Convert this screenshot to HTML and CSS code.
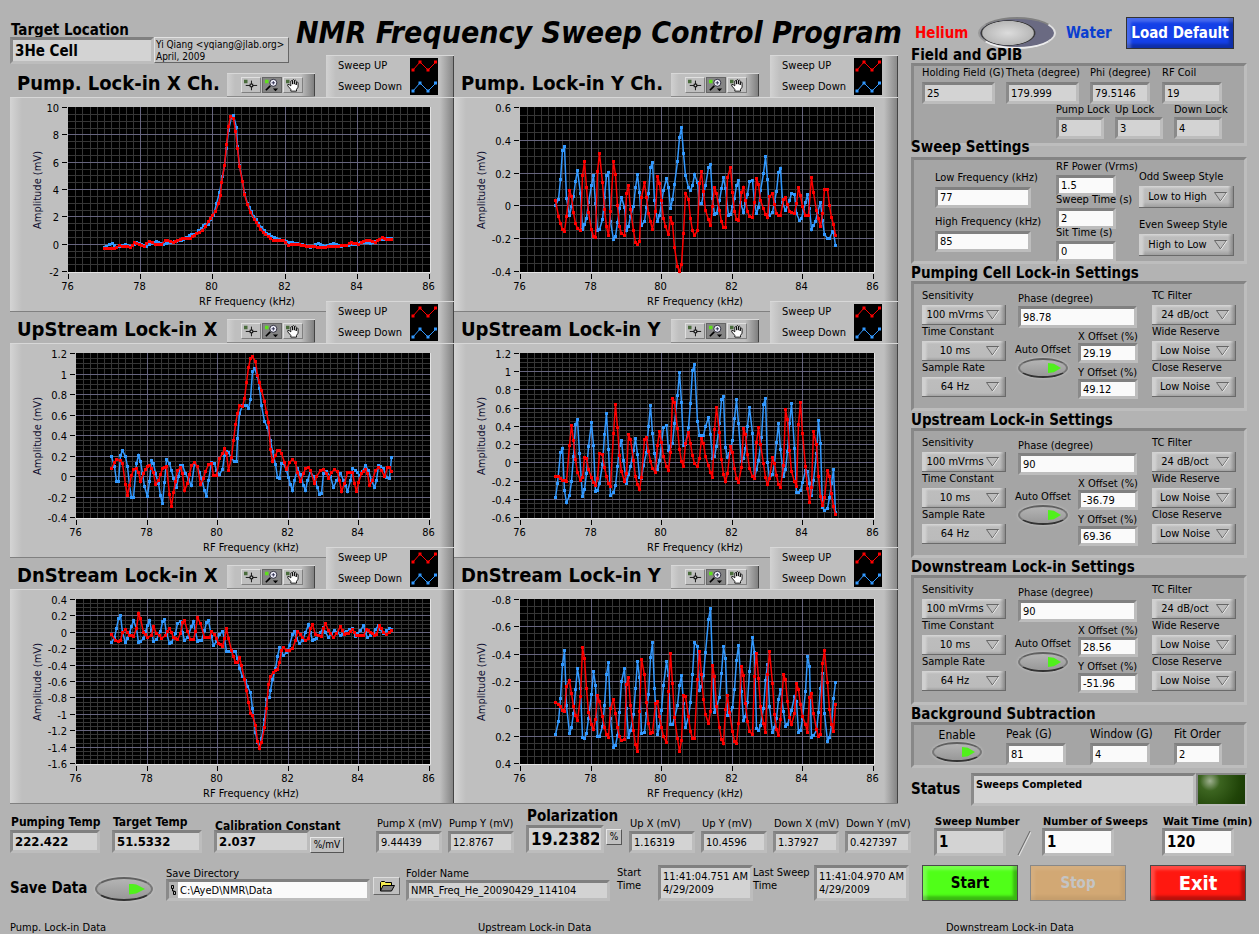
FILE: index.html
```html
<!DOCTYPE html>
<html lang="en">
<head>
<meta charset="utf-8">
<title>NMR Frequency Sweep Control Program</title>
<link rel="stylesheet" href="styles.css">
</head>
<body>
<svg class="defs" aria-hidden="true">
  <symbol id="i-cross" viewBox="0 0 20 16">
    <rect x="2" y="2" width="4" height="4" fill="#4a6b3c"/>
    <path d="M10.500 3v11M4 8.500h13" stroke="#000" fill="none"/>
    <rect x="9" y="7" width="3" height="3" fill="#c8c8c8" stroke="#000"/>
  </symbol>
  <symbol id="i-zoom" viewBox="0 0 20 16">
    <rect x="2" y="2" width="4" height="4" fill="#5fe01c"/>
    <path d="M8 9l-5 5" stroke="#000" stroke-width="2"/>
    <circle cx="11.500" cy="5.500" r="4" fill="#f4f4ff" stroke="#1c1c2c"/>
    <path d="M9.500 5.500h4M11.500 3.500v4" stroke="#224"/>
    <path d="M11 12h6l-3 3z" fill="#000"/>
  </symbol>
  <symbol id="i-hand" viewBox="0 0 20 16">
    <rect x="2" y="2" width="4" height="4" fill="#4a6b3c"/>
    <path d="M7.500 15v-2L4 9V7.500h1.500L7.500 9V3.500L8.500 3l1 .5V7 2.500l1-.7 1 .7V7l.3-4 1-.5.8.7V8l.5-3 1-.4.700.9v5l-1.800 2.500v2z" fill="#fff" stroke="#000"/>
  </symbol>
  <symbol id="i-legend" viewBox="0 0 28 37">
    <rect width="28" height="37" fill="#000"/>
    <g fill="none" stroke="#f00"><path d="M3 12l7-8 8 8 8-8"/><path stroke-width="3" d="M1.500 12h3M8.500 4h3M16.500 12h3M24 4h3"/></g>
    <g fill="none" stroke="#39f"><path d="M3 33l7-8 8 8 8-8"/><path stroke-width="3" d="M1.500 33h3M8.500 25h3M16.500 33h3M24 25h3"/></g>
  </symbol>
</svg>

<main class="page">
  <section class="plots">
    <header class="head">
      <div class="field bold target"><label for="loc">Target Location</label><input id="loc" class="box ro" value="3He Cell" readonly></div>
      <p class="author">Yi Qiang &lt;yqiang@jlab.org&gt;<br>April, 2009</p>
      <h1>NMR Frequency Sweep Control Program</h1>
    </header>
    <div class="charts">
      <article class="chart">
        <div class="chart-head"><h2>Pump. Lock-in X Ch.</h2>
          <div class="tools"><button aria-label="Cursor"><svg><use href="#i-cross"/></svg></button><button class="on" aria-label="Zoom"><svg><use href="#i-zoom"/></svg></button><button aria-label="Pan"><svg><use href="#i-hand"/></svg></button></div>
          <div class="legend"><div><span>Sweep UP</span><span>Sweep Down</span></div><svg><use href="#i-legend"/></svg></div></div>
        <div class="panel"><svg class="graph" data-chart="pumpX" viewBox="0 0 444 215"></svg></div>
      </article>
      <article class="chart">
        <div class="chart-head"><h2>Pump. Lock-in Y Ch.</h2>
          <div class="tools"><button aria-label="Cursor"><svg><use href="#i-cross"/></svg></button><button class="on" aria-label="Zoom"><svg><use href="#i-zoom"/></svg></button><button aria-label="Pan"><svg><use href="#i-hand"/></svg></button></div>
          <div class="legend"><div><span>Sweep UP</span><span>Sweep Down</span></div><svg><use href="#i-legend"/></svg></div></div>
        <div class="panel"><svg class="graph" data-chart="pumpY" viewBox="0 0 444 215"></svg></div>
      </article>
      <article class="chart">
        <div class="chart-head"><h2>UpStream Lock-in X</h2>
          <div class="tools"><button aria-label="Cursor"><svg><use href="#i-cross"/></svg></button><button class="on" aria-label="Zoom"><svg><use href="#i-zoom"/></svg></button><button aria-label="Pan"><svg><use href="#i-hand"/></svg></button></div>
          <div class="legend"><div><span>Sweep UP</span><span>Sweep Down</span></div><svg><use href="#i-legend"/></svg></div></div>
        <div class="panel"><svg class="graph" data-chart="upX" viewBox="0 0 444 215"></svg></div>
      </article>
      <article class="chart">
        <div class="chart-head"><h2>UpStream Lock-in Y</h2>
          <div class="tools"><button aria-label="Cursor"><svg><use href="#i-cross"/></svg></button><button class="on" aria-label="Zoom"><svg><use href="#i-zoom"/></svg></button><button aria-label="Pan"><svg><use href="#i-hand"/></svg></button></div>
          <div class="legend"><div><span>Sweep UP</span><span>Sweep Down</span></div><svg><use href="#i-legend"/></svg></div></div>
        <div class="panel"><svg class="graph" data-chart="upY" viewBox="0 0 444 215"></svg></div>
      </article>
      <article class="chart">
        <div class="chart-head"><h2>DnStream Lock-in X</h2>
          <div class="tools"><button aria-label="Cursor"><svg><use href="#i-cross"/></svg></button><button class="on" aria-label="Zoom"><svg><use href="#i-zoom"/></svg></button><button aria-label="Pan"><svg><use href="#i-hand"/></svg></button></div>
          <div class="legend"><div><span>Sweep UP</span><span>Sweep Down</span></div><svg><use href="#i-legend"/></svg></div></div>
        <div class="panel"><svg class="graph" data-chart="downX" viewBox="0 0 444 215"></svg></div>
      </article>
      <article class="chart">
        <div class="chart-head"><h2>DnStream Lock-in Y</h2>
          <div class="tools"><button aria-label="Cursor"><svg><use href="#i-cross"/></svg></button><button class="on" aria-label="Zoom"><svg><use href="#i-zoom"/></svg></button><button aria-label="Pan"><svg><use href="#i-hand"/></svg></button></div>
          <div class="legend"><div><span>Sweep UP</span><span>Sweep Down</span></div><svg><use href="#i-legend"/></svg></div></div>
        <div class="panel"><svg class="graph" data-chart="downY" viewBox="0 0 444 215"></svg></div>
      </article>
    </div>
  </section>

  <aside class="side">
    <div class="mode">
      <label class="he" for="gas">Helium</label><input id="gas" type="checkbox" class="slide"><label class="wa" for="gas">Water</label>
      <button class="btn blue">Load Default</button>
    </div>

    <h3 class="first">Field and GPIB</h3>
    <div class="group gpib">
      <div class="row r1">
        <div class="field"><label for="hf">Holding Field (G)</label><input id="hf" class="box ro w73" value="25" readonly></div>
        <div class="field"><label for="th">Theta (degree)</label><input id="th" class="box ro w73" value="179.999" readonly></div>
        <div class="field"><label for="ph">Phi (degree)</label><input id="ph" class="box ro w60" value="79.5146" readonly></div>
        <div class="field"><label for="rc">RF Coil</label><input id="rc" class="box ro w60" value="19" readonly></div>
      </div>
      <div class="row r2">
        <div class="field"><label for="pl">Pump Lock</label><input id="pl" class="box ro w48" value="8" readonly></div>
        <div class="field"><label for="ul">Up Lock</label><input id="ul" class="box ro w48" value="3" readonly></div>
        <div class="field"><label for="dl">Down Lock</label><input id="dl" class="box ro w48" value="4" readonly></div>
      </div>
    </div>

    <h3 class="over">Sweep Settings</h3>
    <div class="group sweep">
      <div class="col a">
        <div class="field"><label for="lf">Low Frequency (kHz)</label><input id="lf" class="box w96" value="77"></div>
        <div class="field"><label for="hq">High Frequency (kHz)</label><input id="hq" class="box w96" value="85"></div>
      </div>
      <div class="col b">
        <div class="field"><label for="rp">RF Power (Vrms)</label><input id="rp" class="box w60" value="1.5"></div>
        <div class="field"><label for="st">Sweep Time (s)</label><input id="st" class="box w60" value="2"></div>
        <div class="field"><label for="si">Sit Time (s)</label><input id="si" class="box w60" value="0"></div>
      </div>
      <div class="col c">
        <div class="field"><label for="os">Odd Sweep Style</label><select id="os"><option>Low to High</option></select></div>
        <div class="field"><label for="es">Even Sweep Style</label><select id="es"><option>High to Low</option></select></div>
      </div>
    </div>

    <h3>Pumping Cell Lock-in Settings</h3>
    <div class="group lockin">
      <div class="col">
        <div class="field"><label for="p1">Sensitivity</label><select id="p1"><option>100 mVrms</option></select></div>
        <div class="field"><label for="p2">Time Constant</label><select id="p2"><option>10 ms</option></select></div>
        <div class="field"><label for="p3">Sample Rate</label><select id="p3"><option>64 Hz</option></select></div>
      </div>
      <div class="mid">
        <div class="field phase"><label for="p4">Phase (degree)</label><input id="p4" class="box" value="98.78"></div>
        <div class="auto"><label for="p5">Auto Offset</label><input id="p5" type="checkbox" class="led" checked></div>
        <div class="offs">
          <div class="field"><label for="p6">X Offset (%)</label><input id="p6" class="box w60" value="29.19"></div>
          <div class="field"><label for="p7">Y Offset (%)</label><input id="p7" class="box w60" value="49.12"></div>
        </div>
      </div>
      <div class="col">
        <div class="field"><label for="p8">TC Filter</label><select id="p8"><option>24 dB/oct</option></select></div>
        <div class="field"><label for="p9">Wide Reserve</label><select id="p9"><option>Low Noise</option></select></div>
        <div class="field"><label for="p0">Close Reserve</label><select id="p0"><option>Low Noise</option></select></div>
      </div>
    </div>

    <h3>Upstream Lock-in Settings</h3>
    <div class="group lockin">
      <div class="col">
        <div class="field"><label for="u1">Sensitivity</label><select id="u1"><option>100 mVrms</option></select></div>
        <div class="field"><label for="u2">Time Constant</label><select id="u2"><option>10 ms</option></select></div>
        <div class="field"><label for="u3">Sample Rate</label><select id="u3"><option>64 Hz</option></select></div>
      </div>
      <div class="mid">
        <div class="field phase"><label for="u4">Phase (degree)</label><input id="u4" class="box" value="90"></div>
        <div class="auto"><label for="u5">Auto Offset</label><input id="u5" type="checkbox" class="led" checked></div>
        <div class="offs">
          <div class="field"><label for="u6">X Offset (%)</label><input id="u6" class="box w60" value="-36.79"></div>
          <div class="field"><label for="u7">Y Offset (%)</label><input id="u7" class="box w60" value="69.36"></div>
        </div>
      </div>
      <div class="col">
        <div class="field"><label for="u8">TC Filter</label><select id="u8"><option>24 dB/oct</option></select></div>
        <div class="field"><label for="u9">Wide Reserve</label><select id="u9"><option>Low Noise</option></select></div>
        <div class="field"><label for="u0">Close Reserve</label><select id="u0"><option>Low Noise</option></select></div>
      </div>
    </div>

    <h3>Downstream Lock-in Settings</h3>
    <div class="group lockin">
      <div class="col">
        <div class="field"><label for="d1">Sensitivity</label><select id="d1"><option>100 mVrms</option></select></div>
        <div class="field"><label for="d2">Time Constant</label><select id="d2"><option>10 ms</option></select></div>
        <div class="field"><label for="d3">Sample Rate</label><select id="d3"><option>64 Hz</option></select></div>
      </div>
      <div class="mid">
        <div class="field phase"><label for="d4">Phase (degree)</label><input id="d4" class="box" value="90"></div>
        <div class="auto"><label for="d5">Auto Offset</label><input id="d5" type="checkbox" class="led" checked></div>
        <div class="offs">
          <div class="field"><label for="d6">X Offset (%)</label><input id="d6" class="box w60" value="28.56"></div>
          <div class="field"><label for="d7">Y Offset (%)</label><input id="d7" class="box w60" value="-51.96"></div>
        </div>
      </div>
      <div class="col">
        <div class="field"><label for="d8">TC Filter</label><select id="d8"><option>24 dB/oct</option></select></div>
        <div class="field"><label for="d9">Wide Reserve</label><select id="d9"><option>Low Noise</option></select></div>
        <div class="field"><label for="d0">Close Reserve</label><select id="d0"><option>Low Noise</option></select></div>
      </div>
    </div>

    <h3>Background Subtraction</h3>
    <div class="group bg">
      <div class="auto"><label for="en">Enable</label><input id="en" type="checkbox" class="led" checked></div>
      <div class="field"><label for="pk">Peak (G)</label><input id="pk" class="box w60" value="81"></div>
      <div class="field"><label for="wi">Window (G)</label><input id="wi" class="box w60" value="4"></div>
      <div class="field"><label for="fo">Fit Order</label><input id="fo" class="box w48" value="2"></div>
    </div>

    <div class="status"><b>Status</b><output class="box ro">Sweeps Completed</output><i class="lamp"></i></div>
  </aside>

  <section class="readings">
    <div class="field bold temp"><label for="m1">Pumping Temp</label><input id="m1" class="box ro" value="222.422" readonly></div>
    <div class="field bold temp"><label for="m2">Target Temp</label><input id="m2" class="box ro" value="51.5332" readonly></div>
    <div class="field bold calib"><label for="m3">Calibration Constant</label><input id="m3" class="box ro" value="2.037" readonly></div>
    <button class="unit per">%/mV</button>
    <div class="field mv"><label for="m4">Pump X (mV)</label><input id="m4" class="box ro" value="9.44439" readonly></div>
    <div class="field mv"><label for="m5">Pump Y (mV)</label><input id="m5" class="box ro" value="12.8767" readonly></div>
    <div class="field bold pol"><label for="m6">Polarization</label><input id="m6" class="box ro" value="19.2382" readonly></div>
    <button class="unit pct">%</button>
    <div class="field mv"><label for="m7">Up X (mV)</label><input id="m7" class="box ro" value="1.16319" readonly></div>
    <div class="field mv"><label for="m8">Up Y (mV)</label><input id="m8" class="box ro" value="10.4596" readonly></div>
    <div class="field mv"><label for="m9">Down X (mV)</label><input id="m9" class="box ro" value="1.37927" readonly></div>
    <div class="field mv"><label for="m0">Down Y (mV)</label><input id="m0" class="box ro" value="0.427397" readonly></div>
  </section>

  <section class="sweeps">
    <div class="field bold"><label for="s1">Sweep Number</label><input id="s1" class="box ro" value="1" readonly></div>
    <svg class="slash" viewBox="0 0 14 26"><path d="M1 25L13 1" stroke="#666"/><path d="M2 26L14 2" stroke="#e4e4e4"/></svg>
    <div class="field bold"><label for="s2">Number of Sweeps</label><input id="s2" class="box" value="1"></div>
    <div class="field bold wait"><label for="s3">Wait Time (min)</label><input id="s3" class="box" value="120"></div>
  </section>

  <section class="saving">
    <label class="save" for="sv">Save Data</label><input id="sv" type="checkbox" class="led big" checked>
    <div class="field dir"><label for="sd">Save Directory</label>
      <div class="path"><svg viewBox="0 0 7 12"><path d="M1.500 1.500h2v3h-2zM3.500 7.500h2v3h-2zM2.500 4v3h2" fill="none" stroke="#000"/></svg><input id="sd" value="C:\AyeD\NMR\Data"></div></div>
    <button class="browse" aria-label="Browse"><svg viewBox="0 0 16 12"><path d="M1.500 11V2.500l1-1h3l1 1h6v3" fill="#f4ec50" stroke="#000"/><path d="M1.500 11l2.500-5.500h11.500l-3 5.500z" fill="#808080" stroke="#000"/></svg></button>
    <div class="field folder"><label for="fn">Folder Name</label><input id="fn" class="box ro" value="NMR_Freq_He_20090429_114104" readonly></div>
    <span class="tl">Start<br>Time</span><output class="box ro time">11:41:04.751 AM<br>4/29/2009</output>
    <span class="tl last">Last Sweep<br>Time</span><output class="box ro time">11:41:04.970 AM<br>4/29/2009</output>
  </section>

  <section class="actions">
    <button class="btn green">Start</button>
    <button class="btn tan" disabled>Stop</button>
    <button class="btn red">Exit</button>
  </section>

  <footer class="foot"><span>Pump. Lock-in Data</span><span>Upstream Lock-in Data</span><span>Downstream Lock-in Data</span></footer>
</main>
<script src="charts.js"></script>
</body>
</html>
```

FILE: styles.css
```css
* { box-sizing: border-box; }
body {
  margin: 0;
  background: #b3b3b3;
  color: #000;
  font: 11px/14px "DejaVu Sans Condensed", "DejaVu Sans", sans-serif;
}
input, select, button, output { font: inherit; color: inherit; margin: 0; }
h1, h2, h3, p { margin: 0; font-weight: bold; }
.defs { display: none; }
svg { display: block; }

.page {
  display: grid;
  grid-template-columns: minmax(0, 1fr) 348px;
  padding-left: 10px;
  overflow: hidden;
}

/* fields */
.field { display: flex; flex-direction: column; align-items: flex-start; white-space: nowrap; }
.box {
  display: block;
  height: 22px;
  padding: 0 2px;
  border: 3px solid;
  border-color: #808080 #bdbdbd #bdbdbd #8a8a8a;
  background: #fafafa;
  border-radius: 0;
  outline: 0;
}
.ro { background: #d3d3d3; }
.bold { font-weight: bold; }
.w48 { width: 48px; }
.w60 { width: 60px; }
.w73 { width: 73px; }
.w96 { width: 96px; }

select {
  appearance: none;
  width: 84px;
  height: 20px;
  padding: 0 20px 0 2px;
  border: 0;
  border-radius: 0;
  text-align-last: center;
  background:
    url("data:image/svg+xml,%3Csvg xmlns='http://www.w3.org/2000/svg' width='14' height='10'%3E%3Cpath d='M.5.5h12L6.500 9z' fill='none' stroke='%23666'/%3E%3Cpath d='M7 9.500L13 1' fill='none' stroke='%23eee'/%3E%3C/svg%3E") right 6px center no-repeat,
    linear-gradient(to right, #d0d0d0, #d0d0d0 3px, transparent 6px, transparent calc(100% - 6px), #808080),
    linear-gradient(#d8d8d8, #bdbdbd 3px, #bbb 16px, #999);
  box-shadow: inset -1px -1px 0 #6a6a6a;
}

/* left header */
.head { display: flex; height: 66px; margin-right: 8px; }
.target { padding-top: 20px; width: 144px; font-size: 15px; }
.target label { line-height: 20px; margin-bottom: -3px; padding-left: 1px; }
.target .box { width: 100%; height: 27px; }
.author {
  align-self: flex-start;
  flex: none;
  margin-top: 37px;
  padding: 1px;
  width: 135px;
  height: 26px;
  font: 10px/12px "DejaVu Sans Condensed", "DejaVu Sans", sans-serif;
  border: 1px solid;
  border-color: #e2e2e2 #666 #666 #e2e2e2;
  background: #c0c0c0;
  white-space: nowrap;
}
h1 { font: italic bold 30px/36px "DejaVu Sans Condensed", "DejaVu Sans", sans-serif; padding: 15px 0 0 7px; white-space: nowrap; }

/* charts */
.plots { min-width: 0; }
.charts { display: grid; grid-template-columns: 1fr 1fr; margin-right: 13px; }
.chart-head { display: flex; align-items: flex-end; height: 31px; padding-left: 7px; }
h2 { font-size: 20px; line-height: 28px; flex: 0 0 210px; white-space: nowrap; }
.tools {
  display: flex;
  gap: 1px;
  width: 88px;
  height: 24px;
  padding: 4px 0 0 14px;
  margin-right: auto;
  background: linear-gradient(to right, #d0d0d0, #bfbfbf 8px, #bfbfbf 74px, #808080 87px, #444 87px);
  box-shadow: inset 0 1px #d8d8d8, inset 0 -1px #8a8a8a;
}
.tools button { width: 20px; height: 16px; padding: 0; border: 1px solid; border-color: #e0e0e0 #808080 #808080 #e0e0e0; background: #bfbfbf; }
.tools button.on { background: #858585; border-color: #666; }
.tools svg { width: 18px; height: 14px; }
.legend {
  display: flex;
  justify-content: space-between;
  width: 128px;
  height: 42px;
  padding: 3px 16px 0 12px;
  background: linear-gradient(to right, #d2d2d2, #bfbfbf 10px, #bfbfbf 114px, #8a8a8a 127px, #444 127px);
  box-shadow: inset 0 1px #d8d8d8;
}
.legend span { display: block; height: 21px; line-height: 15px; }
.legend svg { width: 28px; height: 37px; }
.panel {
  background: linear-gradient(to right, #d4d4d4, #bfbfbf 12px, #bfbfbf calc(100% - 14px), #848484 calc(100% - 1px), #444 calc(100% - 1px));
  box-shadow: inset 0 1px #d8d8d8, inset 0 -1px #808080;
}
.graph { width: 100%; font-size: 11px; }
.graph .minor { stroke: #363636; }
.graph .major { stroke: #66647e; }
.graph .tick { stroke: #000; }
.graph .trace { fill: none; stroke-width: 1.5; }
.graph .lip { fill: none; stroke: #e4e4e4; }
.graph .end { text-anchor: end; }
.graph .middle { text-anchor: middle; }
.graph .amp { text-anchor: middle; fill: #101030; }

/* sidebar */
.side { padding-right: 12px; }
.mode { display: flex; align-items: center; padding: 16px 0 0 4px; height: 49px; font-size: 15px; font-weight: bold; }
.he { color: #f00; width: 63px; }
.wa { color: #0a3ed0; width: 60px; }
.slide {
  appearance: none;
  width: 78px;
  height: 32px;
  margin-right: 10px;
  border-radius: 50%;
  border: 2px solid;
  border-color: #808080 #e0e0e0 #eee #999;
  background: radial-gradient(ellipse 28px 13px at 28px 14px, #dcdcdc, #b8b8b8 90%, #333 95%, transparent 100%), #6a6a82;
}
.btn {
  padding: 0;
  height: 36px;
  border: 1px solid #4a4a4a;
  font-weight: bold;
  box-shadow: inset 4px 4px 3px rgba(255, 255, 255, .22), inset -4px -4px 3px rgba(0, 0, 0, .28);
}
.blue { background: #1440e8; color: #fff; width: 108px; height: 32px; font-size: 15px; border-color: #333; white-space: nowrap; }
h3 { font-size: 15px; line-height: 20px; height: 18px; margin-top: -1px; position: relative; white-space: nowrap; }
h3.first { margin-top: -4px; }
h3.over { margin-top: -9px; height: 20px; }
.group {
  border: 3px solid;
  border-color: #848484 #bdbdbd #bdbdbd #888;
  background: #a5a5a5;
  display: flex;
}
.gpib { flex-direction: column; height: 83px; padding: 0 8px; }
.row { display: flex; }
.r1 .field:nth-child(1), .r1 .field:nth-child(2) { width: 84px; }
.r1 .field:nth-child(3) { width: 72px; }
.r1 .box { margin-top: 2px; }
.r2 { padding-left: 134px; margin-top: -1px; }
.r2 .field:nth-child(-n+2) { width: 59px; }

.sweep { height: 107px; }
.sweep .a { width: 142px; padding: 11px 0 0 21px; }
.sweep .a .box { margin: 2px 0 7px; height: 21px; }
.sweep .b { width: 83px; padding-top: 1px; }
.sweep .b .box { height: 21px; margin: 2px 0 -2px; }
.sweep .b label { line-height: 12px; }
.sweep .c { padding-top: 10px; }
.sweep select { width: 95px; height: 22px; margin: 2px 0 10px; }

.lockin { height: 130px; padding: 4px 8px 0; }
.lockin .col { flex: 0 0 84px; }
.lockin .col label { line-height: 16px; }
.lockin select { margin-top: 1px; margin-bottom: -1px; }
.mid { flex: 1; display: grid; grid-template-columns: 63px 1fr; align-content: start; padding: 4px 0 0 9px; }
.phase { grid-column: 1 / 3; padding-left: 3px; margin-bottom: 2px; }
.phase .box { width: 119px; }
.auto { display: flex; flex-direction: column; white-space: nowrap; }
.mid .auto { padding-top: 13px; }
.mid .led { margin-left: 3px; }
.offs { padding-top: 1px; }
.offs label { line-height: 12px; }
.offs .box { margin-bottom: 4px; height: 20px; }

.led {
  appearance: none;
  display: grid;
  align-items: center;
  justify-items: end;
  width: 50px;
  height: 20px;
  margin-top: 1px;
  padding-right: 5px;
  border-radius: 50%;
  border: 2px solid;
  border-color: #606060 #777 #333 #777;
  background: linear-gradient(#b4b4b4, #989898);
  box-shadow: 0 0 3px #ccc;
}
.led::after { content: ""; width: 13px; height: 10px; background: #50f01c; clip-path: polygon(0 0, 45% 8%, 100% 50%, 45% 92%, 0 100%); }

.bg { height: 46px; font-size: 12px; }
.bg .auto { width: 92px; padding: 2px 24px 0 18px; align-items: center; }
.bg .auto label { line-height: 17px; }
.bg .led { margin-top: -2px; flex: none; }
.bg .field label { line-height: 18px; }
.bg .field { width: 84px; }
.bg .field:last-child { width: 48px; }
.bg .box { font-size: 11px; }

.status { display: flex; margin-top: 5px; height: 33px; }
.status b { width: 60px; font-size: 15px; line-height: 32px; }
.status .box { flex: 1; height: 33px; font-weight: bold; line-height: 18px; }
.lamp { width: 51px; border: 2px solid; border-color: #888 #bdbdbd #bdbdbd #888; background: radial-gradient(circle at 12px 6px, #9fb090, #3c6420 10px, #204408 30px, #102a02 56px); }

/* bottom rows */
.readings { display: flex; align-items: flex-end; height: 50px; padding-bottom: 3px; }
.readings label { padding-left: 1px; }
.readings > * { flex: none; }
.temp { width: 102px; }
.calib { width: 96px; }
.temp label { font-size: 12px; line-height: 16px; }
.calib label { font-size: 12px; line-height: 8px; }
.temp .box { width: 90px; height: 23px; font-size: 13px; }
.calib .box { width: 96px; height: 23px; font-size: 13px; }
.unit { padding: 0; border: 1px solid; border-color: #e8e8e8 #555 #555 #e8e8e8; background: #c0c0c0; line-height: 12px; height: 16px; font-size: 10px; }
.per { width: 34px; margin-right: 32px; }
.mv { width: 72px; }
.mv label { line-height: 15px; }
.mv .box { width: 66px; }
.pol { width: 79px; margin-left: 6px; font-size: 15px; }
.pol label { line-height: 18px; }
.pol .box { width: 78px; height: 28px; font-size: 17px; }
.pct { width: 16px; margin: 0 7px 8px 1px; }
.sweeps { display: flex; align-items: flex-end; padding-left: 23px; }
.sweeps .field { width: 72px; }
.sweeps label { line-height: 13px; padding-left: 1px; }
.sweeps .box { width: 72px; height: 28px; font-size: 15px; }
.slash { width: 14px; height: 26px; margin: 0 11px; }
.sweeps .wait { margin-left: 48px; }

.saving { display: flex; height: 45px; padding-top: 9px; }
.saving > * { flex: none; }
.save { width: 85px; font-size: 15px; font-weight: bold; line-height: 46px; }
.led.big { width: 58px; height: 24px; margin: 12px 13px 0 0; padding-right: 6px; }
.led.big::after { width: 16px; height: 11px; }
.dir { width: 204px; }
.dir label { line-height: 18px; margin-bottom: -4px; }
.path { display: flex; align-items: center; width: 100%; height: 24px; border: 3px solid; border-color: #808080 #bdbdbd #bdbdbd #8a8a8a; }
.path svg { width: 7px; height: 12px; margin: 0 1px; flex: none; }
.path input { flex: 1; min-width: 0; height: 100%; border: 0; padding: 0 2px; background: #fafafa; }
.browse { width: 27px; height: 18px; margin: 12px 6px 0 3px; padding: 0 0 0 5px; border: 1px solid; border-color: #ddd #666 #666 #ddd; background: #bfbfbf; }
.browse svg { width: 16px; height: 12px; }
.folder { width: 204px; margin-right: 7px; }
.folder label { line-height: 18px; margin-bottom: -3px; }
.folder .box { width: 100%; }
.tl { width: 41px; line-height: 13px; padding-top: 1px; }
.tl.last { width: 61px; }
.box.time { width: 95px; height: 36px; line-height: 13px; padding: 2px 2px; white-space: nowrap; }
.actions { display: flex; align-items: flex-start; padding: 9px 13px 0 11px; }
.actions .btn { width: 96px; font-size: 15px; }
.green { background: #50ff18; }
.tan { background: #d2a874; color: #c4c4c4; margin: 0 24px 0 12px; border-color: #888; box-shadow: inset 4px 4px 3px rgba(255, 255, 255, .08), inset -4px -4px 3px rgba(0, 0, 0, .06); }
.red { background: #ff1810; color: #fff; }
.actions .red { font-size: 20px; }
.foot { grid-column: 1 / 3; display: grid; grid-template-columns: 468px 468px 1fr; padding-top: 20px; line-height: 14px; }
```

FILE: charts.js
```js
// Trace knots are held at three units per pixel; ox/oy give the panel corner on that grid.
const charts = {
  pumpX: { left: 58, top: 10, step: -2, rows: 6, dec: 0, ox: 30, oy: 291,
    up: "312,745 342,745 358,737 390,742 402,728 432,739 447,723 465,732 485,733 495,720 520,728 540,717 570,716 590,700 608,692 625,665 637,647 646,634 655,610 660,587 665,547 673,495 680,433 686,380 692,350 700,355 707,395 713,445 719,499 727,545 734,583 741,612 752,636 763,657 775,677 790,698 805,708 820,722 850,721 865,735 890,733 920,738 960,742 1000,740 1040,735 1055,728 1075,732 1100,720 1125,727 1147,713 1160,719 1175,718",
    down: "312,742 338,731 350,742 375,732 390,740 410,728 440,738 470,724 490,732 515,726 530,724 550,718 567,706 590,700 610,677 625,672 640,645 650,610 658,578 668,530 673,495 680,445 686,390 694,350 700,347 708,383 713,440 719,495 727,545 734,580 741,610 760,648 785,682 800,700 830,716 860,725 900,732 930,742 955,730 975,738 1000,730 1025,738 1060,734 1090,726 1110,730 1140,718 1175,716" },
  pumpY: { left: 66, top: 0.6, step: -0.2, rows: 5, dec: 1, ox: 12, oy: 291,
    up: "316,601 325,649 331,670 337,688 343,694 349,649 358,571 364,588 370,637 376,670 382,685 391,691 397,526 403,484 409,562 415,637 424,688 430,709 436,712 442,515 448,460 458,547 463,628 469,679 475,706 481,634 490,484 496,523 502,616 508,679 514,700 523,706 529,580 535,556 541,628 550,691 556,727 562,733 568,724 574,592 583,547 589,592 595,640 607,688 616,634 622,529 628,550 640,655 655,703 661,652 667,670 673,742 682,799 688,814 694,793 700,700 706,580 715,598 721,655 727,691 733,706 742,691 748,550 754,514 760,574 766,631 775,658 781,676 793,562 799,580 808,631 814,664 820,682 826,682 832,533 841,502 847,577 853,634 859,658 865,661 874,577 880,562 886,601 892,634 898,649 907,652 913,607 919,535 925,553 931,600 940,625 946,643 952,652 958,589 967,580 973,613 979,640 985,646 991,646 1000,598 1006,592 1012,613 1018,634 1033,640 1039,610 1045,562 1051,586 1057,620 1066,646 1075,646 1084,532 1090,577 1099,631 1111,679 1117,640 1123,568 1132,568 1138,616 1144,652 1150,673 1156,706",
    down: "316,616 325,597 331,539 337,451 343,440 349,595 358,646 370,590 376,545 382,511 391,580 397,688 409,656 424,556 430,526 436,610 442,691 448,688 458,658 470,526 475,518 482,665 490,718 496,709 508,625 515,592 523,622 529,690 535,679 550,620 556,562 562,524 568,578 575,676 583,664 595,580 601,502 607,487 613,600 622,664 628,646 640,570 649,535 655,562 661,625 667,598 673,553 682,484 688,412 694,382 700,460 706,526 715,562 721,571 727,555 733,523 742,547 748,610 754,610 766,556 775,502 781,493 787,595 793,643 799,640 808,601 820,532 826,565 834,646 841,643 853,595 859,556 865,542 871,607 880,637 892,583 898,545 907,541 913,607 919,640 925,622 940,520 946,469 952,538 958,646 967,637 979,574 985,517 991,505 997,607 1006,631 1012,620 1024,580 1033,583 1039,640 1047,661 1054,655 1066,607 1072,583 1078,625 1084,688 1096,665 1111,607 1117,660 1123,703 1132,715 1138,715 1146,694 1150,697 1156,736" },
  upX: { left: 66, top: 1.2, step: -0.2, rows: 8, dec: 1, ox: 30, oy: 129,
    up: "334,505 343,487 350,478 360,480 367,490 376,553 382,586 388,556 394,526 400,508 409,506 415,517 421,544 430,520 442,499 448,496 460,517 466,553 475,540 487,505 500,500 508,583 514,619 520,577 532,511 541,502 548,520 554,571 562,550 574,496 583,487 592,500 601,553 610,535 625,493 634,490 641,525 648,527 658,475 667,460 673,445 679,460 685,511 694,472 700,421 706,373 712,340 718,316 727,319 733,295 739,247 745,202 751,175 757,169 766,184 772,226 778,247 784,271 793,304 799,337 805,367 811,448 817,484 826,466 832,451 838,451 844,460 852,487 860,508 868,487 877,478 886,487 892,517 900,544 910,520 916,505 925,502 932,510 942,550 950,530 960,511 970,508 980,520 985,535 994,517 1003,508 1012,514 1018,540 1024,574 1032,550 1042,517 1057,517 1062,550 1069,574 1075,547 1084,520 1096,508 1102,520 1108,556 1117,540 1126,510 1135,502 1144,512 1152,528 1162,503 1168,502 1174,514",
    down: "334,469 343,500 349,544 355,544 361,466 367,451 376,469 382,499 388,556 394,592 400,592 409,490 415,466 421,484 427,520 433,559 442,589 448,544 454,481 460,490 466,520 475,550 481,586 487,610 493,547 499,478 508,490 520,535 529,562 541,496 548,496 556,520 574,556 583,490 592,500 604,535 613,570 619,589 625,541 634,487 642,490 650,510 658,523 667,508 673,466 679,454 685,457 694,475 703,485 709,484 712,415 718,340 727,317 740,316 745,325 751,298 757,214 764,205 772,230 778,265 784,316 793,364 802,382 811,421 817,454 826,493 832,532 838,535 844,490 850,490 859,510 865,532 871,553 877,571 883,541 892,505 900,522 910,556 916,571 922,541 931,514 940,530 952,562 958,583 964,580 970,520 979,514 990,530 1000,562 1009,540 1020,520 1030,540 1042,574 1050,540 1057,505 1066,510 1078,525 1088,515 1097,496 1105,510 1115,540 1123,562 1129,541 1135,496 1150,505 1160,532 1168,535 1174,472" },
  upY: { left: 66, top: 1.2, step: -0.2, rows: 9, dec: 1, ox: 12, oy: 129,
    up: "316,529 325,529 337,541 349,544 358,436 364,376 370,421 376,478 382,517 391,541 397,532 403,472 409,475 415,508 424,532 430,547 436,556 442,535 448,460 458,463 463,502 469,529 475,550 481,559 490,400 496,313 502,382 508,466 514,514 523,544 529,520 535,403 541,418 550,480 556,529 562,553 568,568 574,532 583,418 589,412 595,454 601,484 607,505 616,517 622,436 628,394 634,427 640,469 649,499 655,511 661,457 667,295 673,307 682,385 688,448 694,484 700,499 706,430 715,397 721,430 727,466 733,490 742,499 748,475 754,415 760,430 766,469 775,496 781,517 787,532 793,388 799,322 808,397 814,478 820,523 826,544 832,520 841,439 847,457 853,505 859,535 865,547 874,502 880,385 886,403 892,463 898,505 907,529 913,535 919,427 925,382 931,433 940,490 946,532 952,553 958,535 967,472 973,490 979,526 985,553 991,562 1000,496 1006,328 1012,358 1018,450 1024,514 1033,544 1039,559 1045,373 1051,307 1057,400 1066,499 1072,565 1078,607 1084,562 1090,394 1099,433 1105,529 1111,589 1117,616 1123,592 1132,511 1138,529 1144,580 1150,619 1156,643",
    down: "316,592 322,550 331,457 337,445 343,571 349,607 358,586 364,544 370,469 376,373 382,358 388,460 397,589 403,568 409,520 415,439 424,367 430,436 436,574 442,571 448,550 458,493 463,403 469,340 475,448 481,586 490,577 496,556 502,499 508,436 514,421 520,480 529,550 541,499 550,451 556,415 562,463 568,532 574,535 589,457 595,379 601,316 607,400 613,460 622,508 628,481 640,382 649,376 655,451 667,430 673,370 682,286 688,217 694,307 700,436 706,433 715,382 721,310 727,211 733,193 742,364 748,406 760,406 766,379 775,352 781,403 787,475 793,469 799,439 808,370 814,298 820,289 826,442 832,472 838,460 847,421 853,355 859,298 865,370 873,484 880,475 886,445 892,379 898,322 907,400 913,532 919,508 925,481 934,412 940,313 946,295 952,487 958,535 967,523 973,490 979,427 985,370 991,448 1000,529 1006,508 1012,454 1018,370 1024,310 1033,445 1039,577 1045,577 1051,571 1057,547 1066,510 1072,514 1084,586 1090,541 1099,460 1105,361 1111,430 1117,622 1123,631 1132,625 1138,592 1144,550 1150,508 1156,637" },
  downX: { left: 66, top: 0.4, step: -0.2, rows: 10, dec: 1, ox: 30, oy: 132,
    up: "334,268 345,285 355,289 361,286 367,262 376,253 388,271 400,274 409,250 415,205 421,220 430,262 442,277 453,270 460,244 470,265 485,280 495,270 508,250 520,277 533,283 541,265 548,232 554,226 562,260 572,283 580,282 586,260 592,217 601,236 612,277 628,277 634,259 642,268 655,295 667,304 673,280 679,250 685,280 694,316 706,352 712,352 718,337 724,360 733,403 739,437 745,472 751,505 758,512 766,541 772,589 778,610 784,592 793,547 799,490 805,418 811,394 820,382 832,373 838,352 844,316 850,307 860,315 868,316 877,310 885,285 892,259 900,268 916,286 925,280 931,250 937,238 946,268 964,274 970,250 976,235 985,256 1000,277 1010,265 1020,244 1033,268 1045,265 1058,252 1070,271 1090,271 1098,252 1110,262 1122,271 1130,268 1138,241 1150,262 1160,268 1174,256",
    down: "334,292 343,278 349,250 355,220 361,211 367,262 376,292 382,280 394,244 400,226 409,250 415,292 421,289 430,280 442,240 448,226 460,289 470,284 480,260 487,230 493,223 500,265 508,295 515,292 525,265 532,236 541,229 547,262 553,286 563,278 574,244 580,229 586,260 592,289 604,286 613,256 619,233 625,226 634,274 640,301 650,290 658,268 667,259 673,280 679,319 706,319 712,340 718,370 726,394 735,405 742,424 751,442 757,490 766,562 772,592 778,604 784,580 793,523 799,463 807,457 812,437 817,403 826,370 832,335 838,307 850,331 860,322 868,300 877,268 883,259 890,280 898,295 907,286 916,262 925,238 932,262 937,286 950,280 960,262 970,247 976,262 985,277 1003,256 1021,271 1040,260 1057,249 1066,274 1080,255 1090,242 1097,262 1102,277 1112,272 1120,265 1135,241 1150,265 1168,250 1174,253" },
  downY: { left: 66, top: -0.8, step: 0.2, rows: 6, dec: 1, ox: 12, oy: 132,
    up: "316,472 325,478 331,484 337,496 343,499 349,424 358,406 364,445 370,484 376,511 382,526 391,454 397,307 403,340 409,430 415,502 424,538 430,553 436,523 442,451 448,469 458,514 463,547 469,568 475,577 481,490 490,463 496,505 502,547 508,574 514,586 523,583 529,418 535,397 541,481 550,556 556,598 562,619 568,499 574,343 583,388 589,472 595,535 601,565 607,562 616,475 622,469 628,514 634,547 640,574 649,592 655,439 661,325 667,415 673,517 682,580 688,619 694,586 700,451 706,454 715,514 721,559 727,580 733,580 742,403 748,319 754,388 760,463 766,508 775,535 781,499 787,361 793,394 799,484 808,547 814,583 820,595 826,493 832,451 838,502 847,559 853,589 859,595 865,535 874,364 880,391 886,475 892,529 898,559 907,568 913,394 919,325 925,400 931,484 940,535 946,562 952,388 958,319 967,415 973,508 979,553 985,571 991,523 1000,388 1006,403 1012,469 1018,517 1024,538 1033,505 1039,415 1045,433 1051,478 1057,514 1066,538 1072,562 1078,457 1084,445 1090,505 1099,553 1105,574 1111,568 1117,355 1123,316 1132,412 1138,493 1144,538 1150,559 1156,478",
    down: "316,568 325,529 331,460 337,358 343,316 349,481 358,565 364,547 370,505 376,433 382,370 391,430 397,577 403,580 409,565 415,520 424,448 430,379 436,421 442,574 448,574 458,544 463,481 469,388 475,352 482,520 490,607 496,601 502,571 508,502 514,409 523,370 529,490 535,577 541,556 550,508 556,430 562,349 568,397 574,565 583,562 595,448 601,337 607,292 613,430 622,568 628,544 634,496 640,421 649,349 655,390 661,538 667,538 673,520 682,481 688,421 694,391 700,475 706,547 715,514 721,472 727,388 733,292 742,304 748,436 754,424 760,391 766,322 775,223 781,190 787,360 793,502 799,484 808,457 814,385 820,304 826,340 832,511 838,511 847,487 853,433 859,346 865,301 874,439 880,526 886,514 892,472 898,379 907,277 913,322 919,550 925,556 931,541 940,490 946,406 952,358 958,484 967,562 973,547 979,520 985,463 991,433 1000,499 1006,544 1012,538 1018,520 1024,496 1033,454 1039,470 1045,562 1051,556 1057,520 1066,439 1072,334 1078,364 1084,577 1090,571 1099,556 1105,502 1111,430 1117,385 1123,505 1132,589 1138,577 1144,540 1150,460 1156,412" }
};

const RIGHT = 420, TOP = 10, BOTTOM = 175;
const line = (cls, x1, y1, x2, y2) => `<line class="${cls}" x1="${x1}" y1="${y1}" x2="${x2}" y2="${y2}"/>`;
const snap = v => Math.round(v) + 0.5;

function samples(text, c) {
  const knots = text.split(" ").map(p => p.split(",").map(Number));
  const out = [knots[0]];
  for (let i = 1; i < knots.length; i++) {
    const [ax, ay] = knots[i - 1], [bx, by] = knots[i];
    const n = Math.max(1, Math.round((bx - ax) / 7.5));
    for (let k = 1; k <= n; k++) out.push([ax + (bx - ax) * k / n, ay + (by - ay) * k / n]);
  }
  return out.map(([x, y]) => [Math.floor((x - c.ox) / 3), Math.floor((y - c.oy) / 3)]);
}

function trace(text, c, color) {
  const pts = samples(text, c);
  return `<polyline class="trace" stroke="${color}" points="${pts.map(([x, y]) => `${x + .5},${y + .5}`).join(" ")}"/>` +
    `<path fill="${color}" d="${pts.map(([x, y]) => `M${x - 1} ${y - 1}h3v3h-3z`).join("")}"/>`;
}

for (const svg of document.querySelectorAll(".graph")) {
  const c = charts[svg.dataset.chart];
  const w = RIGHT - 1 - c.left, h = BOTTOM - 1 - TOP;
  let s = `<rect x="${c.left}" y="${TOP}" width="${w + 1}" height="${h + 1}" fill="#000"/>`;
  for (let i = 1; i < 50; i++) if (i % 10) { const x = snap(c.left + w * i / 50); s += line("minor", x, TOP, x, BOTTOM); }
  for (let i = 1; i < c.rows * 4; i++) if (i % 4) { const y = snap(TOP + h * i / c.rows / 4); s += line("minor", c.left, y, RIGHT, y); }
  for (let i = 0; i <= 5; i++) {
    const x = snap(c.left + w * i / 5);
    if (i % 5) s += line("major", x, TOP, x, BOTTOM);
    s += line("tick", x, 177, x, 182) + `<text class="middle" x="${x - 1}" y="193">${76 + 2 * i}</text>`;
  }
  for (let i = 0; i <= c.rows; i++) {
    const y = snap(TOP + h * i / c.rows);
    if (i % c.rows) s += line("major", c.left, y, RIGHT, y);
    const v = Number((c.top + c.step * i).toFixed(c.dec)) || 0;
    s += line("tick", c.left - 6, y, c.left - 1, y) + `<text class="end" x="${c.left - 9}" y="${y + 4}">${v}</text>`;
  }
  s += `<path class="lip" d="M${c.left} ${BOTTOM + .5}H${RIGHT + .5}V${TOP}"/>`;
  s += trace(c.down, c, "#3399ff") + trace(c.up, c, "#ff0000");
  s += `<text class="middle" x="${(c.left + RIGHT) / 2 - 2}" y="208">RF Frequency (kHz)</text>`;
  s += `<text class="amp" transform="translate(31 93) rotate(-90)">Amplitude (mV)</text>`;
  svg.innerHTML = s;
}
```
